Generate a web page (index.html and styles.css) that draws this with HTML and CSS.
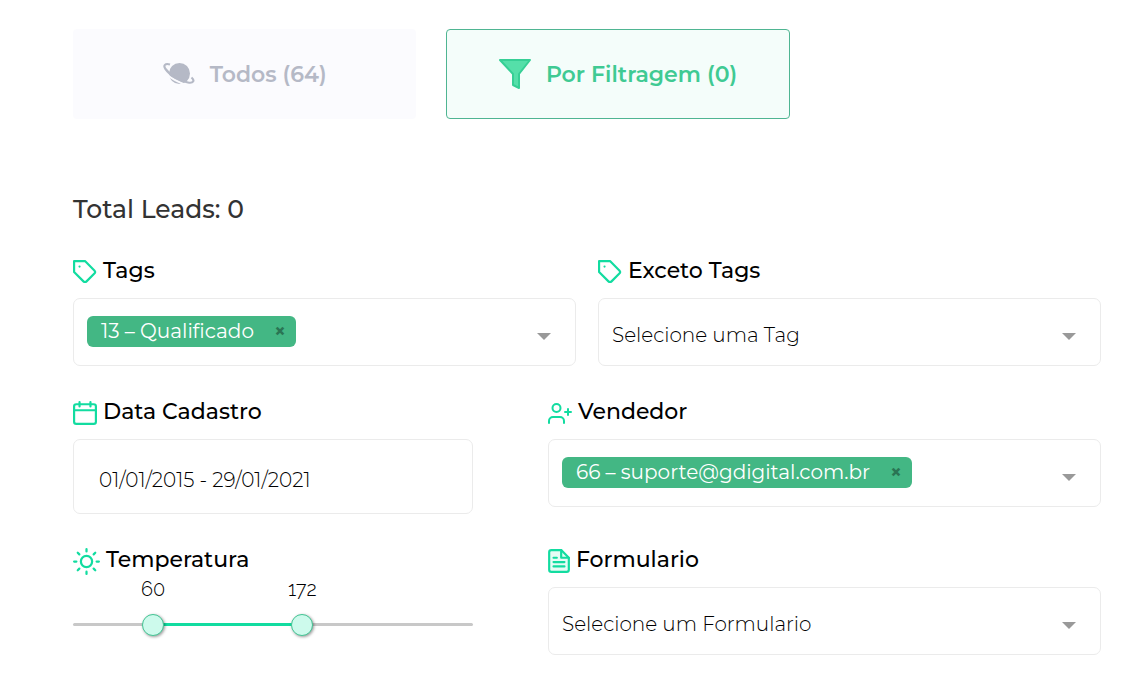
FILE: index.html
```html
<!DOCTYPE html>
<html lang="pt-BR">
<head>
  <meta charset="UTF-8">
  <meta name="viewport" content="width=device-width, initial-scale=1.0">
  <title>Leads</title>
  <link rel="stylesheet" href="styles.css">
</head>
<body>

  <main class="page">

    <div class="tabs">
      <button type="button" class="tab">
        <svg class="tab-icon" viewBox="0 0 32 32" aria-hidden="true">
          <circle cx="16.500" cy="15.500" r="10.500" fill="#b5b9c6"/>
          <path d="M2 15C8 20.500 14 24 24 27" fill="none" stroke="#fbfbfe" stroke-width="1.800"/>
          <path d="M7 6.500C2 5 0 7.500 2.500 11C7 17.500 17 23 25 24.500C30.500 25.500 32 22.500 28.500 19.500" fill="none" stroke="#b5b9c6" stroke-width="2.200"/>
        </svg>
        Todos (64)
      </button>
      <button type="button" class="tab active">
        <svg class="tab-icon" viewBox="0 0 32 32" aria-hidden="true">
          <path d="M1 2h30L20 16v14l-6-3V16z" fill="#55dfa9" stroke="#36cf95" stroke-width="2" stroke-linejoin="round"/>
        </svg>
        Por Filtragem (0)
      </button>
    </div>

    <h1 class="total">Total Leads: 0</h1>

    <form class="filters">

      <div class="row row-half">
        <div class="field">
          <label for="tags">
            <svg class="icon" viewBox="1 1 22 22" aria-hidden="true">
              <path d="M20.590 13.410l-7.170 7.170a2 2 0 0 1-2.830 0L2 12V2h10l8.590 8.590a2 2 0 0 1 0 2.820z"/>
              <path d="M7 7h.01"/>
            </svg>
            Tags
          </label>
          <div class="select-box">
            <span class="chip">13 – Qualificado <button type="button" aria-label="Remover">×</button></span>
            <select id="tags"><option></option></select>
          </div>
        </div>
        <div class="field">
          <label for="except-tags">
            <svg class="icon" viewBox="1 1 22 22" aria-hidden="true">
              <path d="M20.590 13.410l-7.170 7.170a2 2 0 0 1-2.830 0L2 12V2h10l8.590 8.590a2 2 0 0 1 0 2.820z"/>
              <path d="M7 7h.01"/>
            </svg>
            Exceto Tags
          </label>
          <div class="select-box">
            <select id="except-tags"><option>Selecione uma Tag</option></select>
          </div>
        </div>
      </div>

      <div class="row">
        <div class="field">
          <label for="date">
            <svg class="icon" viewBox="1 1 22 22" aria-hidden="true">
              <rect x="2" y="4" width="20" height="18" rx="2"/>
              <path d="M7 2v4M17 2v4M2 9.500h20"/>
            </svg>
            Data Cadastro
          </label>
          <input type="text" id="date" class="date" value="01/01/2015 - 29/01/2021">
        </div>
        <div class="field">
          <label for="seller">
            <svg class="icon" viewBox="0 0 24 24" aria-hidden="true">
              <path d="M16 22v-2a4 4 0 0 0-4-4H5a4 4 0 0 0-4 4v2"/>
              <circle cx="8.500" cy="7" r="4"/>
              <path d="M20 8v6M17 11h6"/>
            </svg>
            Vendedor
          </label>
          <div class="select-box">
            <span class="chip">66 – suporte@gdigital.com.br <button type="button" aria-label="Remover">×</button></span>
            <select id="seller"><option></option></select>
          </div>
        </div>
      </div>

      <div class="row">
        <div class="field">
          <label for="temp-min">
            <svg class="icon icon-sun" viewBox="0 0 24 24" aria-hidden="true">
              <circle cx="12" cy="12" r="5"/>
              <path d="M12 1v2M12 21v2M4.220 4.220l1.420 1.420M18.360 18.360l1.420 1.420M1 12h2M21 12h2M4.220 19.780l1.420-1.420M18.360 5.640l1.420-1.420"/>
            </svg>
            Temperatura
          </label>
          <div class="range">
            <div class="range-values">
              <output for="temp-min" style="left: 20%">60</output>
              <output for="temp-max" style="left: 57.330%">172</output>
            </div>
            <div class="range-track">
              <div class="range-fill" style="left: 20%; width: 37.330%"></div>
              <input type="range" id="temp-min" min="0" max="300" value="60">
              <input type="range" id="temp-max" min="0" max="300" value="172" aria-label="Temperatura máxima">
            </div>
          </div>
        </div>
        <div class="field">
          <label for="form">
            <svg class="icon icon-file" viewBox="2 1 20 22" aria-hidden="true">
              <path d="M14 2H5a2 2 0 0 0-2 2v16a2 2 0 0 0 2 2h14a2 2 0 0 0 2-2V9z"/>
              <path d="M14 2v7h7M17 13H7M17 17H7M10 9H7"/>
            </svg>
            Formulario
          </label>
          <div class="select-box">
            <select id="form"><option>Selecione um Formulario</option></select>
          </div>
        </div>
      </div>

    </form>
  </main>

</body>
</html>
```

FILE: styles.css
```css
* {
  margin: 0;
  padding: 0;
  box-sizing: border-box;
}

body {
  font-family: Montserrat, Inter, sans-serif;
  font-size: 20px;
  color: #000;
  background: #fff;
}

button, input, select {
  font: inherit;
  color: inherit;
}

.page {
  padding: 29px 37px 36px 73px;
}

.tabs {
  display: flex;
  gap: 30px;
}

.tab {
  display: flex;
  align-items: center;
  justify-content: center;
  gap: 15px;
  width: 33.4%;
  height: 90px;
  font-size: 22px;
  font-weight: 600;
  color: #b5b9c6;
  background: #fbfbfe;
  border: 1px solid #fbfbfe;
  border-radius: 4px;
  cursor: pointer;
}

.tab.active {
  color: #3fca93;
  background: #f4fdfa;
  border-color: #4fb592;
}

.tab-icon {
  width: 32px;
  height: 32px;
}

.total {
  margin: 74px 0 32px;
  font-size: 25px;
  font-weight: 500;
  line-height: 33px;
  color: #333;
}

.filters {
  display: flex;
  flex-direction: column;
  gap: 33px;
}

.row {
  display: grid;
  grid-template-columns: 400fr 553fr;
  align-items: start;
  column-gap: 75px;
}

.row-half {
  grid-template-columns: 1fr 1fr;
  column-gap: 22px;
}

.field label {
  display: flex;
  align-items: flex-start;
  gap: 6px;
  height: 26px;
  margin-bottom: 14px;
  font-size: 22px;
  font-weight: 500;
  line-height: 26px;
}

.icon {
  width: 24px;
  height: 24px;
  margin-top: 2px;
  fill: none;
  stroke: #12dca0;
  stroke-width: 2;
  stroke-linecap: round;
  stroke-linejoin: round;
}

.icon-sun {
  width: 27px;
  height: 27px;
  margin-top: 1px;
}

.icon-file {
  width: 22px;
}

.icon-file path:first-child {
  fill: #e6fcf5;
}

.select-box {
  position: relative;
  display: flex;
  align-items: center;
  height: 68px;
  padding: 0 0 2px 13px;
  border: 1px solid #ebebeb;
  border-radius: 7px;
}

.select-box::after {
  content: "";
  position: absolute;
  right: 24px;
  top: 34px;
  border: 7px solid transparent;
  border-top-color: #999;
  border-bottom: 0;
  pointer-events: none;
}

.select-box select {
  flex: 1;
  align-self: stretch;
  min-width: 0;
  padding-top: 8px;
  font-weight: 300;
  background: none;
  border: 0;
  appearance: none;
}

.chip {
  display: flex;
  align-items: center;
  justify-content: space-between;
  gap: 20px;
  height: 31px;
  padding: 0 10px 0 14px;
  color: #fff;
  background: #43b784;
  border-radius: 6px;
}

.chip button {
  font-size: 20px;
  font-weight: 700;
  line-height: 1;
  color: #2a7554;
  background: none;
  border: 0;
  cursor: pointer;
}

.date {
  width: 100%;
  height: 75px;
  padding: 6px 25px 0;
  font-weight: 300;
  border: 1px solid #ebebeb;
  border-radius: 7px;
}

.range {
  margin-top: -14px;
}

.range-values {
  position: relative;
  height: 41px;
}

.range-values output {
  position: absolute;
  top: 4px;
  font-family: Raleway, Montserrat, Inter, sans-serif;
  font-weight: 300;
  transform: translateX(-50%);
}

.range-track {
  position: relative;
  height: 22px;
}

.range-track::before,
.range-fill {
  content: "";
  position: absolute;
  top: 9px;
  height: 3px;
  background: #c8c8c8;
  border-radius: 2px;
}

.range-track::before {
  left: 0;
  width: 100%;
}

.range-fill {
  background: #12dca0;
}

/* the inputs overhang by half a thumb so a value maps straight to a percentage */
.range-track input {
  position: absolute;
  top: 0;
  left: -11px;
  width: calc(100% + 22px);
  height: 22px;
  background: none;
  appearance: none;
  pointer-events: none;
}

.range-track input::-webkit-slider-thumb {
  width: 22px;
  height: 22px;
  background: #cdfaec;
  border: 1px solid #43c695;
  border-radius: 50%;
  box-shadow: 1px 1px 3px rgba(0, 0, 0, 0.4);
  appearance: none;
  pointer-events: auto;
  cursor: pointer;
}
```
